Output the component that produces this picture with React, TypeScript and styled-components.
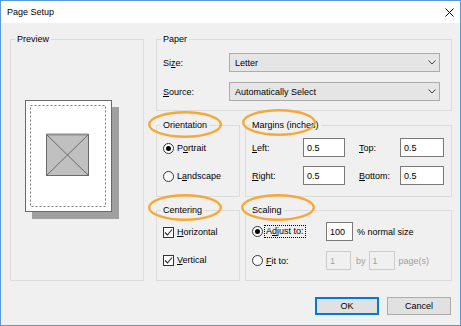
import styled, { createGlobalStyle } from "styled-components";

const GlobalStyle = createGlobalStyle`
    html, body {
        margin: 0;
        padding: 0;
        background: #ffffff;
    }
    body {
        font-family: "Liberation Sans", Arial, sans-serif;
        font-size: 9px;
        color: #000000;
    }
`;

const Window = styled.div`
    box-sizing: border-box;
    width: 461px;
    height: 326px;
    border: 1px solid #5b9bd5;
    background: #f0f0f0;
    display: flex;
    flex-direction: column;
`;

const TitleBar = styled.div`
    height: 22px;
    flex: none;
    background: #ffffff;
    display: flex;
    align-items: center;
    justify-content: space-between;
    padding: 0 6px 0 6px;
`;

const Title = styled.span`
    font-size: 9px;
`;

const Body = styled.div`
    flex: 1;
    padding: 10px 8px 0 9px;
    display: flex;
    flex-direction: column;
`;

const MainGrid = styled.div`
    display: grid;
    grid-template-columns: 134px 1fr;
    column-gap: 12px;
`;

const RightColumn = styled.div`
    display: flex;
    flex-direction: column;
`;

const PairRow = styled.div<{ $top: number }>`
    display: grid;
    grid-template-columns: 84px 1fr;
    column-gap: 5px;
    margin-top: ${({ $top }) => $top}px;
`;

// every group keeps 6px on the left, the legend pulls back to sit 7px in
const Group = styled.fieldset<{ $pad: string }>`
    margin: 0;
    min-width: 0;
    border: 1px solid #dcdcdc;
    padding: ${({ $pad }) => $pad};
    padding-left: 6px;
    display: flex;
    flex-direction: column;
`;

const Legend = styled.legend`
    position: relative;
    margin-left: -2px;
    padding: 0 2px;
    line-height: 12px;
`;

const Highlight = styled.svg<{ $left: number; $top: number }>`
    position: absolute;
    left: ${({ $left }) => $left}px;
    top: ${({ $top }) => $top}px;
    overflow: visible;
    pointer-events: none;
`;

const PreviewArea = styled.div`
    flex: 1;
    display: flex;
    align-items: center;
    justify-content: center;
    padding: 0 17px 7px 0;
`;

const Rows = styled.div<{ $gap: number }>`
    display: flex;
    flex-direction: column;
    gap: ${({ $gap }) => $gap}px;
`;

const FieldRow = styled.div`
    display: flex;
    align-items: center;
    height: 19px;
`;

const FieldLabel = styled.span<{ $w: number; $ml?: number }>`
    flex: none;
    width: ${({ $w }) => $w}px;
    margin-left: ${({ $ml = 0 }) => $ml}px;
`;

const Key = styled.span`
    text-decoration: underline;
`;

const Select = styled.div`
    box-sizing: border-box;
    width: 211px;
    height: 19px;
    border: 1px solid #adadad;
    background: #e5e5e5;
    display: flex;
    align-items: center;
    justify-content: space-between;
    padding: 0 3px 0 5px;
`;

const TextBox = styled.div<{ $w: number; $disabled?: boolean }>`
    box-sizing: border-box;
    flex: none;
    width: ${({ $w }) => $w}px;
    height: 19px;
    border: 1px solid ${({ $disabled }) => ($disabled ? "#cccccc" : "#7a7a7a")};
    background: ${({ $disabled }) => ($disabled ? "#f0f0f0" : "#ffffff")};
    color: ${({ $disabled }) => ($disabled ? "#a0a0a0" : "#000000")};
    display: flex;
    align-items: center;
    padding-left: 3px;
`;

const Option = styled.div<{ $h?: number }>`
    display: flex;
    align-items: center;
    gap: 3px;
    height: ${({ $h = 16 }) => $h}px;
`;

const Radio = styled.span<{ $on?: boolean }>`
    box-sizing: border-box;
    flex: none;
    width: 11px;
    height: 11px;
    border: 1px solid #333333;
    border-radius: 50%;
    background: #ffffff;
    display: flex;
    align-items: center;
    justify-content: center;
    &::after {
        content: "";
        width: 5px;
        height: 5px;
        border-radius: 50%;
        background: #000000;
        display: ${({ $on }) => ($on ? "block" : "none")};
    }
`;

const Check = styled.span`
    box-sizing: border-box;
    flex: none;
    width: 11px;
    height: 11px;
    border: 1px solid #333333;
    background: #ffffff;
    display: flex;
    align-items: center;
    justify-content: center;
`;

const FocusText = styled.span`
    border: 1px dotted #000000;
    padding: 0 1px;
    line-height: 11px;
`;

const PlainText = styled.span`
    margin-left: 2px;
`;

const Muted = styled.span<{ $ml: number; $mr?: number }>`
    color: #a0a0a0;
    margin-left: ${({ $ml }) => $ml}px;
    margin-right: ${({ $mr = 0 }) => $mr}px;
`;

const Suffix = styled.span`
    margin-left: 4px;
`;

const Lead = styled.div`
    width: 74px;
    flex: none;
    display: flex;
    align-items: center;
    gap: 1px;
`;

const ButtonRow = styled.div`
    display: flex;
    justify-content: flex-end;
    gap: 8px;
    margin-top: 16px;
    padding-right: 1px;
`;

const Button = styled.div<{ $primary?: boolean }>`
    box-sizing: border-box;
    width: 64px;
    height: 18px;
    background: #e1e1e1;
    border: 1px solid ${({ $primary }) => ($primary ? "#0078d7" : "#adadad")};
    box-shadow: ${({ $primary }) => ($primary ? "inset 0 0 0 1px #0078d7" : "none")};
    display: flex;
    align-items: center;
    justify-content: center;
`;

function Ring({ left, top }: { left: number; top: number }) {
    return (
        <Highlight $left={left} $top={top} width="74" height="27" viewBox="0 0 74 27">
            <ellipse cx="37" cy="13.5" rx="35.8" ry="12.3" fill="none" stroke="#f6a938" strokeWidth="2.4" />
        </Highlight>
    );
}

function Chevron() {
    return (
        <svg width="8" height="5" viewBox="0 0 8 5">
            <polyline points="0.5,0.5 4,4 7.5,0.5" fill="none" stroke="#444" strokeWidth="1" />
        </svg>
    );
}

function Tick() {
    return (
        <svg width="9" height="9" viewBox="0 0 9 9">
            <polyline points="1,4.5 3.5,7 8,1.5" fill="none" stroke="#222" strokeWidth="1.1" />
        </svg>
    );
}

function PagePreview() {
    return (
        <svg width="94" height="119" viewBox="0 0 94 119">
            <rect x="7" y="7" width="87" height="112" fill="#a0a0a0" />
            <rect x="0.5" y="0.5" width="86" height="111" fill="#ffffff" stroke="#6a6a6a" />
            <rect x="5.5" y="5.5" width="75" height="101" fill="none" stroke="#7a7a7a" strokeDasharray="2 2" />
            <rect x="21.5" y="34.5" width="42" height="41" fill="#c0c0c0" stroke="#6a6a6a" />
            <line x1="21.5" y1="34.5" x2="63.5" y2="34.5" stroke="#909090" strokeWidth="2" />
            <line x1="21.5" y1="34.5" x2="63.5" y2="75.5" stroke="#6a6a6a" />
            <line x1="63.5" y1="34.5" x2="21.5" y2="75.5" stroke="#6a6a6a" />
        </svg>
    );
}

function CloseIcon() {
    return (
        <svg width="9" height="9" viewBox="0 0 9 9">
            <path d="M0.5 0.5 L8.5 8.5 M8.5 0.5 L0.5 8.5" stroke="#000" strokeWidth="1" />
        </svg>
    );
}

export default function App() {
    return (
        <>
            <GlobalStyle />
            <Window>
                <TitleBar>
                    <Title>Page Setup</Title>
                    <CloseIcon />
                </TitleBar>
                <Body>
                    <MainGrid>
                        <Group $pad="0">
                            <Legend>Preview</Legend>
                            <PreviewArea>
                                <PagePreview />
                            </PreviewArea>
                        </Group>
                        <RightColumn>
                            <Group $pad="8px 11px 9px">
                                <Legend>Paper</Legend>
                                <Rows $gap={10}>
                                    <FieldRow>
                                        <FieldLabel $w={66}>
                                            Si<Key>z</Key>e:
                                        </FieldLabel>
                                        <Select>
                                            <span>Letter</span>
                                            <Chevron />
                                        </Select>
                                    </FieldRow>
                                    <FieldRow>
                                        <FieldLabel $w={66}>
                                            <Key>S</Key>ource:
                                        </FieldLabel>
                                        <Select>
                                            <span>Automatically Select</span>
                                            <Chevron />
                                        </Select>
                                    </FieldRow>
                                </Rows>
                            </Group>
                            <PairRow $top={8}>
                                <Group $pad="9px 4px 12px">
                                    <Legend>
                                        Orientation
                                        <Ring left={-13} top={-8} />
                                    </Legend>
                                    <Rows $gap={12}>
                                        <Option>
                                            <Radio $on />
                                            <span>
                                                P<Key>o</Key>rtrait
                                            </span>
                                        </Option>
                                        <Option>
                                            <Radio />
                                            <span>
                                                L<Key>a</Key>ndscape
                                            </span>
                                        </Option>
                                    </Rows>
                                </Group>
                                <Group $pad="7px 6px 11px">
                                    <Legend>
                                        Margins (inches)
                                        <Ring left={-8} top={-10} />
                                    </Legend>
                                    <Rows $gap={9}>
                                        <FieldRow>
                                            <FieldLabel $w={51}>
                                                <Key>L</Key>eft:
                                            </FieldLabel>
                                            <TextBox $w={42}>0.5</TextBox>
                                            <FieldLabel $w={41} $ml={14}>
                                                <Key>T</Key>op:
                                            </FieldLabel>
                                            <TextBox $w={44}>0.5</TextBox>
                                        </FieldRow>
                                        <FieldRow>
                                            <FieldLabel $w={51}>
                                                <Key>R</Key>ight:
                                            </FieldLabel>
                                            <TextBox $w={42}>0.5</TextBox>
                                            <FieldLabel $w={41} $ml={14}>
                                                <Key>B</Key>ottom:
                                            </FieldLabel>
                                            <TextBox $w={44}>0.5</TextBox>
                                        </FieldRow>
                                    </Rows>
                                </Group>
                            </PairRow>
                            <PairRow $top={7}>
                                <Group $pad="8px 4px 12px">
                                    <Legend>
                                        Centering
                                        <Ring left={-13} top={-10} />
                                    </Legend>
                                    <Rows $gap={12}>
                                        <Option>
                                            <Check>
                                                <Tick />
                                            </Check>
                                            <span>
                                                <Key>H</Key>orizontal
                                            </span>
                                        </Option>
                                        <Option>
                                            <Check>
                                                <Tick />
                                            </Check>
                                            <span>
                                                <Key>V</Key>ertical
                                            </span>
                                        </Option>
                                    </Rows>
                                </Group>
                                <Group $pad="6px 6px 10px">
                                    <Legend>
                                        Scaling
                                        <Ring left={-9} top={-10} />
                                    </Legend>
                                    <Rows $gap={10}>
                                        <FieldRow>
                                            <Lead>
                                                <Radio $on />
                                                <FocusText>
                                                    A<Key>d</Key>just to:
                                                </FocusText>
                                            </Lead>
                                            <TextBox $w={27}>100</TextBox>
                                            <Suffix>% normal size</Suffix>
                                        </FieldRow>
                                        <FieldRow>
                                            <Lead>
                                                <Radio />
                                                <PlainText>
                                                    <Key>F</Key>it to:
                                                </PlainText>
                                            </Lead>
                                            <TextBox $w={25} $disabled>
                                                1
                                            </TextBox>
                                            <Muted $ml={5} $mr={3}>by</Muted>
                                            <TextBox $w={26} $disabled>
                                                1
                                            </TextBox>
                                            <Muted $ml={4}>page(s)</Muted>
                                        </FieldRow>
                                    </Rows>
                                </Group>
                            </PairRow>
                        </RightColumn>
                    </MainGrid>
                    <ButtonRow>
                        <Button $primary>OK</Button>
                        <Button>Cancel</Button>
                    </ButtonRow>
                </Body>
            </Window>
        </>
    );
}
